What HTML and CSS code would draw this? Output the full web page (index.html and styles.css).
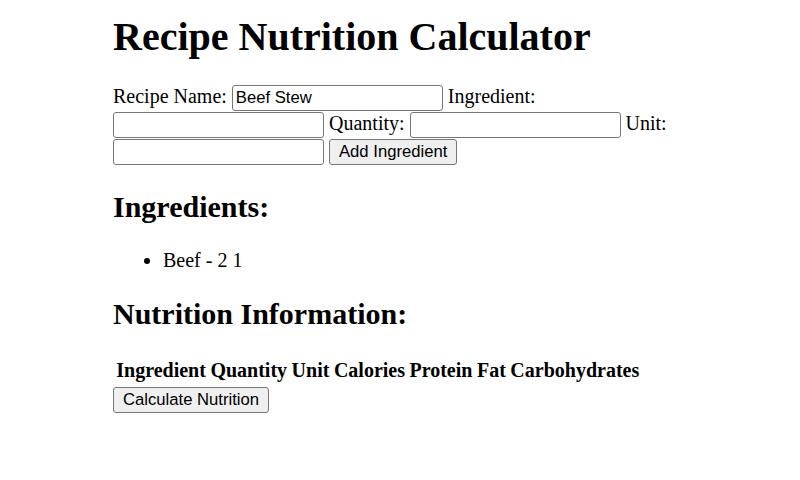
FILE: index.html
```html
<!DOCTYPE html>
<html lang="en">
<head>
<meta charset="utf-8">
<title>Recipe Nutrition Calculator</title>
<link rel="stylesheet" href="styles.css">
</head>
<body>
<div class="container">
  <h1 class="title">Recipe Nutrition Calculator</h1>
  <form class="recipe-form">
    <label class="field-label" for="recipe-name">Recipe Name:</label>
    <input class="text-input" type="text" id="recipe-name" value="Beef Stew">
    <label class="field-label" for="ingredient">Ingredient:</label>
    <input class="text-input" type="text" id="ingredient">
    <label class="field-label" for="quantity">Quantity:</label>
    <input class="text-input" type="text" id="quantity">
    <label class="field-label" for="unit">Unit:</label>
    <input class="text-input" type="text" id="unit">
    <button class="btn" type="button">Add Ingredient</button>
  </form>
  <h2 class="section-title">Ingredients:</h2>
  <ul class="ingredient-list">
    <li>Beef - 2 1</li>
  </ul>
  <h2 class="section-title">Nutrition Information:</h2>
  <table class="nutrition-table">
    <thead>
      <tr>
        <th>Ingredient</th>
        <th>Quantity</th>
        <th>Unit</th>
        <th>Calories</th>
        <th>Protein</th>
        <th>Fat</th>
        <th>Carbohydrates</th>
      </tr>
    </thead>
    <tbody></tbody>
  </table>
  <button class="btn" type="button">Calculate Nutrition</button>
</div>
</body>
</html>
```
FILE: styles.css
```css
html, body {
  margin: 0;
  padding: 0;
  background: #ffffff;
}

body {
  font-family: "Liberation Serif", "Times New Roman", serif;
  font-size: 20px;
  color: #000000;
}

.container {
  width: 574px;
  margin: 0 auto;
}

.title {
  font-size: 40px;
  font-weight: bold;
  margin: 13px 0 24.3px;
}

.recipe-form {
  margin: 0;
  line-height: 25px;
}

.text-input {
  box-sizing: border-box;
  width: 211px;
  height: 26px;
  padding: 1px 3px;
  border: 1px solid #767676;
  border-radius: 3px;
  font-family: "Liberation Sans", Arial, sans-serif;
  font-size: 16.67px;
  line-height: normal;
  color: #000000;
  background: #ffffff;
  vertical-align: baseline;
}

.btn {
  box-sizing: border-box;
  height: 26px;
  padding: 1px 9px;
  border: 1px solid #767676;
  border-radius: 3px;
  background: #efefef;
  font-family: "Liberation Sans", Arial, sans-serif;
  font-size: 16.67px;
  line-height: normal;
  color: #000000;
}

.section-title {
  font-size: 30px;
  font-weight: bold;
  margin: 24.9px 0;
}

.ingredient-list {
  margin: 20px 0;
  padding-left: 50px;
}

.nutrition-table {
  border-collapse: separate;
  border-spacing: 2.5px;
  margin-bottom: 2px;
}

.nutrition-table th {
  padding: 1.25px;
  font-weight: bold;
  text-align: center;
}
```
